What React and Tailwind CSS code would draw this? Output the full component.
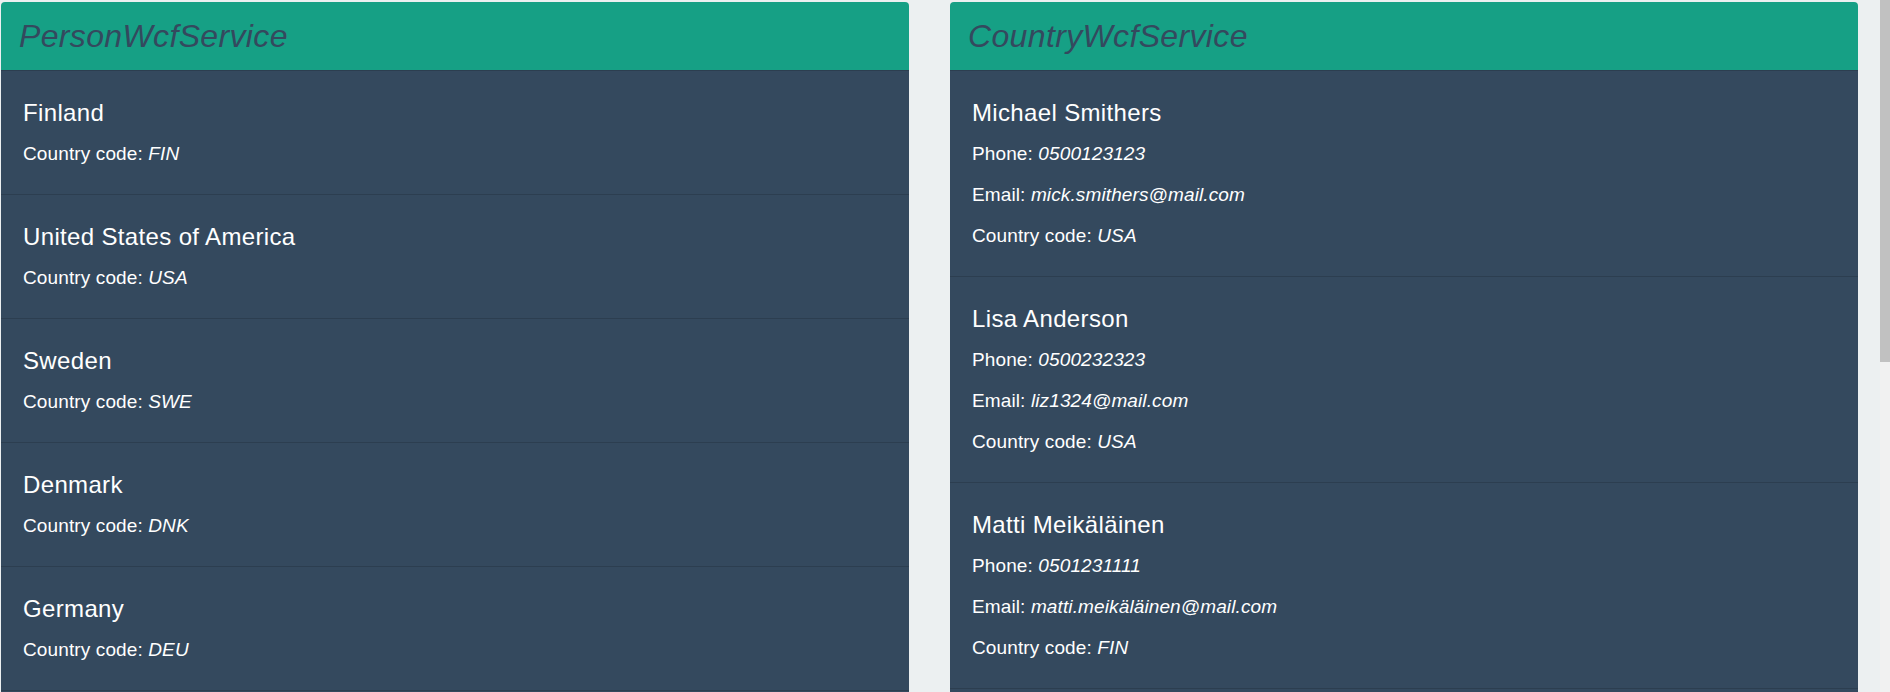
import React from 'react';

const countries = [
  { name: 'Finland', code: 'FIN' },
  { name: 'United States of America', code: 'USA' },
  { name: 'Sweden', code: 'SWE' },
  { name: 'Denmark', code: 'DNK' },
  { name: 'Germany', code: 'DEU' },
];

const persons = [
  { name: 'Michael Smithers', phone: '0500123123', email: 'mick.smithers@mail.com', code: 'USA' },
  { name: 'Lisa Anderson', phone: '0500232323', email: 'liz1324@mail.com', code: 'USA' },
  { name: 'Matti Meikäläinen', phone: '0501231111', email: 'matti.meikäläinen@mail.com', code: 'FIN' },
];

const Field = ({ label, value }) => (
  <p className="text-[19px] leading-[27px] tracking-[0.12px] mt-[14px]">
    {label}: <em>{value}</em>
  </p>
);

const Panel = ({ title, children }) => (
  <div className="w-[908px] shrink-0">
    <div className="bg-[#16a085] rounded-t-[4px] h-[69px] pt-[16px] pl-[18px] border-b border-[#2c3e50]">
      <h2 className="text-[32px] leading-[36px] tracking-[0.35px] italic text-[#34495e]">{title}</h2>
    </div>
    <div className="bg-[#34495e] text-white pb-[40px]">{children}</div>
  </div>
);

const Item = ({ title, children }) => (
  <div className="pt-[29px] pb-[27px] px-[22px] border-b border-[#2c3e50]">
    <h3 className="text-[24px] leading-[26px] tracking-[0.35px]">{title}</h3>
    {children}
  </div>
);

export default function App() {
  return (
    <div className="h-[692px] overflow-hidden flex items-start bg-[#ecf0f1] font-['Liberation_Sans',Arial,sans-serif]">
      <div className="flex-1 flex items-start gap-[41px] pl-px pt-[2px]">
        <Panel title="PersonWcfService">
          {countries.map((c) => (
            <Item key={c.code} title={c.name}>
              <Field label="Country code" value={c.code} />
            </Item>
          ))}
        </Panel>
        <Panel title="CountryWcfService">
          {persons.map((p) => (
            <Item key={p.name} title={p.name}>
              <Field label="Phone" value={p.phone} />
              <Field label="Email" value={p.email} />
              <Field label="Country code" value={p.code} />
            </Item>
          ))}
        </Panel>
      </div>
      {/* fake scrollbar */}
      <div className="w-[10px] h-[692px] bg-[#f1f1f1]">
        <div className="h-[362px] bg-[#c1c1c1]"></div>
      </div>
    </div>
  );
}
